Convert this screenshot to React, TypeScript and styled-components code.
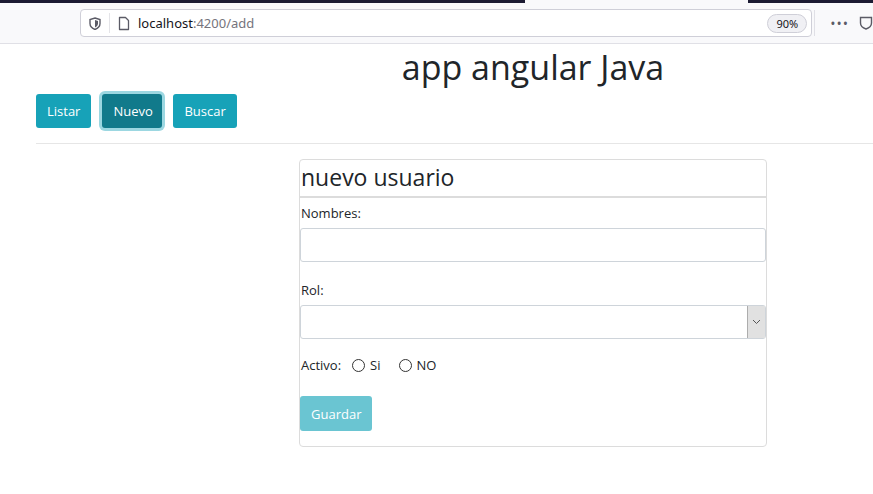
import React from 'react';
import styled, { createGlobalStyle } from 'styled-components';

const GlobalStyle = createGlobalStyle`
  html, body {
    margin: 0;
    padding: 0;
    background: #fff;
    overflow: hidden;
  }
  body {
    font-family: "Open Sans", "Noto Sans", sans-serif;
    color: #212529;
  }
`;

const Chrome = styled.div`
  width: 873px;
  background: #f9f9fb;
  border-bottom: 1px solid #e0e0e6;
`;

const TabStrip = styled.div`
  display: flex;
  height: 3px;
  background: #1c1b33;
  .tab {
    margin-left: 525px;
    width: 223px;
    background: #f9f9fb;
  }
`;

const NavRow = styled.div`
  display: flex;
  align-items: center;
  height: 40px;
  padding-left: 80px;
`;

const UrlBox = styled.div`
  display: flex;
  align-items: center;
  width: 744px;
  height: 28px;
  box-sizing: border-box;
  border: 1px solid #cfcfd8;
  border-radius: 4px;
  background: #fff;
  padding: 0 4px 0 8px;
  font-family: "Noto Sans", sans-serif;
  font-size: 13px;
  .sep {
    width: 1px;
    height: 20px;
    background: #e4e4e8;
    margin: 0 8px 0 8px;
  }
  .host {
    color: #15141a;
    margin-left: 8px;
  }
  .path {
    color: #75747c;
  }
  .zoom {
    margin-left: auto;
    font-size: 11px;
    border: 1px solid #cfcfd8;
    background: #f0f0f4;
    border-radius: 10px;
    padding: 1px 8px;
    color: #15141a;
  }
`;

const ToolbarRight = styled.div`
  display: flex;
  align-items: center;
  margin-left: 2px;
  height: 26px;
  border-left: 1px solid #e0e0e6;
  padding-left: 15px;
  gap: 10px;
  color: #5b5b66;
  font-size: 14px;
  letter-spacing: 1px;
`;

const Page = styled.div`
  width: 994px;
  padding: 0 0 0 36px;
`;

const Title = styled.h1`
  margin: 3px 0 0;
  text-align: center;
  font-weight: 400;
  font-size: 34px;
  line-height: 40px;
`;

const Nav = styled.div`
  display: flex;
  gap: 8px;
  margin-top: 7px;
`;

const NavButton = styled.button<{ $active?: boolean }>`
  height: 34px;
  padding: 0 11px;
  border: none;
  border-radius: 3px;
  font-family: inherit;
  font-size: 13px;
  color: #fff;
  background: ${(p) => (p.$active ? '#117a8b' : '#17a2b8')};
  ${(p) =>
    p.$active &&
    `
    width: 60px;
    margin: 0 3px;
    box-shadow: 0 0 0 3px rgba(58, 176, 195, 0.5);
  `}
`;

const Rule = styled.hr`
  margin: 15px 0 0;
  border: none;
  border-top: 1px solid #e6e6e6;
`;

const Card = styled.div`
  width: 468px;
  margin: 15px 0 0 263px;
  box-sizing: border-box;
  border: 1px solid #dcdcdc;
  border-radius: 4px;
  padding-bottom: 15px;
`;

const CardHeader = styled.div`
  font-size: 23px;
  line-height: 34px;
  padding: 0 1px 2px;
  border-bottom: 2px solid #dcdcdc;
`;

const Form = styled.div`
  display: flex;
  flex-direction: column;
  padding: 0;
  font-size: 13px;
`;

const Label = styled.label`
  display: block;
  margin: 6px 0 6px 1px;
  line-height: 18px;
`;

const Field = styled.div`
  height: 34px;
  box-sizing: border-box;
  border: 1px solid #ced4da;
  border-radius: 3px;
  margin-bottom: 13px;
  display: flex;
  justify-content: flex-end;
  .arrow {
    width: 17px;
    background: #e1e1e1;
    border-left: 1px solid #adadad;
    display: flex;
    align-items: center;
    justify-content: center;
  }
`;

const RadioRow = styled.div`
  display: flex;
  align-items: center;
  margin: 4px 0 0 1px;
  height: 18px;
  .lbl {
    margin-right: 11px;
  }
  .opt {
    display: flex;
    align-items: center;
    gap: 5px;
    margin-right: 18px;
  }
  .dot {
    width: 11px;
    height: 11px;
    border: 1px solid #333;
    border-radius: 50%;
  }
`;

const SaveButton = styled.button`
  align-self: flex-start;
  margin-top: 22px;
  height: 35px;
  padding: 0 11px;
  border: none;
  border-radius: 3px;
  font-family: inherit;
  font-size: 13px;
  color: #fff;
  background: #6ac5d2;
`;

export default function App() {
  return (
    <>
      <GlobalStyle />
      <Chrome>
        <TabStrip>
          <div className="tab" />
        </TabStrip>
        <NavRow>
          <UrlBox>
            <svg width="12" height="13" viewBox="0 0 12 13">
              <path d="M6 1 L11 2.5 V6.5 C11 9.5 8.5 11.5 6 12.5 C3.5 11.5 1 9.5 1 6.5 V2.5 Z" fill="none" stroke="#5b5b66" strokeWidth="1.4" />
              <path d="M6 3 L9 4 V6.5 C9 8.5 7.5 9.8 6 10.5 Z" fill="#5b5b66" />
            </svg>
            <span className="sep" />
            <svg width="12" height="15" viewBox="0 0 12 15">
              <path d="M1.5 1.5 H7.5 L10.5 4.5 V13.5 H1.5 Z" fill="none" stroke="#5b5b66" strokeWidth="1.3" strokeLinejoin="round" />
            </svg>
            <span className="host">localhost</span>
            <span className="path">:4200/add</span>
            <span className="zoom">90%</span>
          </UrlBox>
          <ToolbarRight>
            <span>•••</span>
            <svg width="14" height="14" viewBox="0 0 14 14">
              <path d="M1.5 1.5 H12.5 V7 C12.5 10 10 12 7 13 C4 12 1.5 10 1.5 7 Z" fill="none" stroke="#5b5b66" strokeWidth="1.4" />
            </svg>
          </ToolbarRight>
        </NavRow>
      </Chrome>
      <Page>
        <Title>app angular Java</Title>
        <Nav>
          <NavButton>Listar</NavButton>
          <NavButton $active>Nuevo</NavButton>
          <NavButton>Buscar</NavButton>
        </Nav>
        <Rule />
        <Card>
          <CardHeader>nuevo usuario</CardHeader>
          <Form>
            <Label>Nombres:</Label>
            <Field />
            <Label>Rol:</Label>
            <Field>
              <span className="arrow">
                <svg width="9" height="6" viewBox="0 0 9 6">
                  <path d="M1 1 L4.5 4.5 L8 1" fill="none" stroke="#555" strokeWidth="1" />
                </svg>
              </span>
            </Field>
            <RadioRow>
              <span className="lbl">Activo:</span>
              <span className="opt">
                <span className="dot" />
                Si
              </span>
              <span className="opt">
                <span className="dot" />
                NO
              </span>
            </RadioRow>
            <SaveButton>Guardar</SaveButton>
          </Form>
        </Card>
      </Page>
    </>
  );
}
